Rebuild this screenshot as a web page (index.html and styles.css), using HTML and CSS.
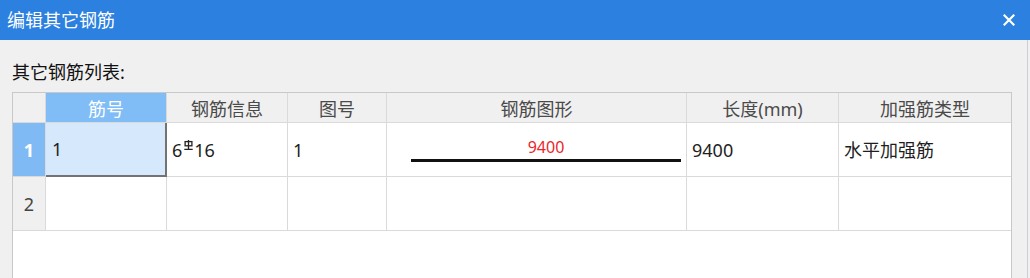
FILE: index.html
```html
<!DOCTYPE html>
<html lang="zh-CN">
<head>
<meta charset="utf-8">
<title>编辑其它钢筋</title>
<link rel="stylesheet" href="styles.css">
</head>
<body>
<div class="dialog">
  <div class="titlebar">
    <span class="title">编辑其它钢筋</span>
    <svg class="close" width="12" height="12" viewBox="0 0 12 12"><path d="M1.5 1.5 L10.5 10.5 M10.5 1.5 L1.5 10.5" stroke="#fff" stroke-width="2.2" stroke-linecap="square"/></svg>
  </div>
  <div class="content">
    <div class="label">其它钢筋列表:</div>
    <div class="grid">
      <div class="cell head corner"></div>
      <div class="cell head sel-head">筋号</div>
      <div class="cell head">钢筋信息</div>
      <div class="cell head">图号</div>
      <div class="cell head">钢筋图形</div>
      <div class="cell head">长度(mm)</div>
      <div class="cell head last">加强筋类型</div>

      <div class="cell rowhead sel-row">1</div>
      <div class="cell data selected">1</div>
      <div class="cell data">6<svg class="rebar" width="9" height="11" viewBox="0 0 9 11"><rect x="1.1" y="1.6" width="6.8" height="4.2" fill="none" stroke="#222" stroke-width="1.3"/><path d="M4.5 0 V9.2 M0.3 9.4 H8.7" stroke="#222" stroke-width="1.3" fill="none"/></svg>16</div>
      <div class="cell data">1</div>
      <div class="cell data shape"><span class="dim">9400</span><span class="bar"></span></div>
      <div class="cell data">9400</div>
      <div class="cell data last">水平加强筋</div>

      <div class="cell rowhead">2</div>
      <div class="cell data"></div>
      <div class="cell data"></div>
      <div class="cell data"></div>
      <div class="cell data"></div>
      <div class="cell data"></div>
      <div class="cell data last"></div>
    </div>
  </div>
</div>
</body>
</html>
```

FILE: styles.css
```css
* { box-sizing: border-box; }
html, body {
  margin: 0;
  padding: 0;
}
body {
  width: 1030px;
  height: 278px;
  overflow: hidden;
  background: #f0f0f0;
  font-family: "Noto Sans", "Noto Sans CJK SC", sans-serif;
  font-size: 18px;
  color: #1e1e1e;
}
.dialog {
  width: 1030px;
  height: 278px;
  display: flex;
  flex-direction: column;
}
.titlebar {
  height: 40px;
  flex: none;
  background: #2b80e0;
  color: #fff;
  display: flex;
  align-items: center;
  justify-content: space-between;
  padding: 0 15px 0 7px;
}
.title {
  font-size: 18px;
  line-height: 24px;
}
.close {
  display: block;
}
.content {
  width: 1028px;
  flex: 1;
  min-height: 0;
  border-right: 1px solid #cbd0d8;
  padding: 20px 0 0 12px;
  display: flex;
  flex-direction: column;
}
.label {
  height: 24px;
  flex: none;
  line-height: 24px;
  margin-bottom: 8px;
  color: #111;
}
.grid {
  width: 1000px;
  flex: 1;
  min-height: 0;
  background: #fff;
  border: 1px solid #c8c8c8;
  border-bottom: none;
  display: grid;
  grid-template-columns: 33px 121px 121px 99px 300px 152px 172px;
  grid-template-rows: 30px 54px 54px;
  align-content: start;
}
.cell {
  border-right: 1px solid #dadada;
  border-bottom: 1px solid #dadada;
  display: flex;
  align-items: center;
  line-height: 24px;
  white-space: nowrap;
}
.cell.last {
  border-right: none;
}
.head {
  background: #f0f0f0;
  color: #4a4a4a;
  justify-content: center;
  padding-top: 2px;
}
.sel-head {
  background: #80bcf6;
  color: #fff;
}
.rowhead {
  background: #f0f0f0;
  color: #454545;
  justify-content: center;
}
.sel-row {
  background: #7fbaf5;
  color: #fff;
  font-weight: 700;
}
.data {
  padding-left: 5px;
}
.selected {
  background: #d5e8fc;
  border-right: 2px solid #737373;
  border-bottom: 2px solid #737373;
  padding-left: 6px;
}
.rebar {
  display: block;
  flex: none;
  margin: 0 1px 8px 2px;
}
.shape {
  flex-direction: column;
  justify-content: center;
  align-items: stretch;
  padding: 0 5px 0 24px;
}
.dim {
  color: #e8262b;
  font-size: 16px;
  line-height: 20px;
  text-align: center;
}
.bar {
  display: block;
  height: 3px;
  background: #111;
  margin-top: 2px;
}
```
